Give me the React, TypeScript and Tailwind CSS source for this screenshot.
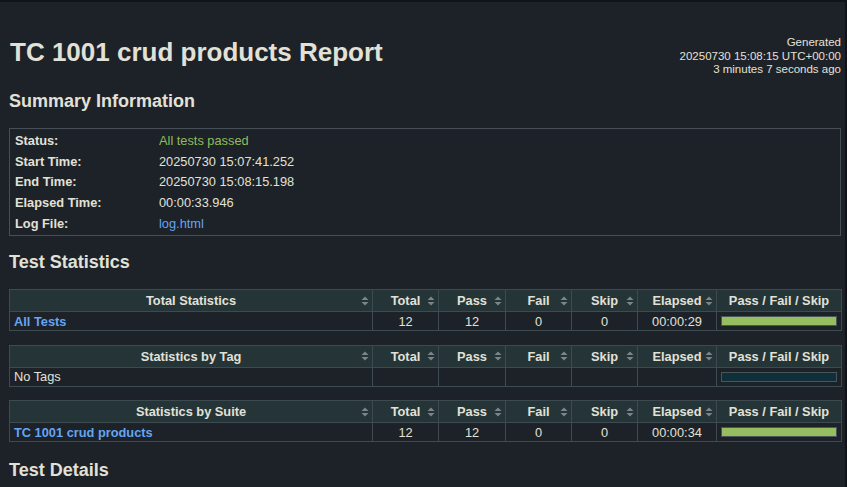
import React from "react";

const SortIcon = () => (
  <svg width="8" height="10" viewBox="0 0 8 10" className="absolute right-[3px] top-1/2 -translate-y-1/2">
    <polygon points="4,0.5 7.5,4 0.5,4" fill="#7c8589" />
    <polygon points="0.5,6 7.5,6 4,9.5" fill="#7c8589" />
  </svg>
);

type Row = {
  name: string;
  link: boolean;
  total: string;
  pass: string;
  fail: string;
  skip: string;
  elapsed: string;
  bar: "pass" | "empty";
};

const StatTable = ({ title, row }: { title: string; row: Row }) => {
  const th = "relative h-[22px] border border-[#3d4a50] bg-[#253537] text-center font-bold text-[#e2e1d7] p-0 leading-[15px]";
  const td = "h-[19px] border border-[#3d4a50] text-center p-0 leading-[15px]";
  return (
    <table className="table-fixed border-collapse w-[832px]">
      <colgroup>
        <col className="w-[363px]" />
        <col className="w-[66px]" />
        <col className="w-[67px]" />
        <col className="w-[66px]" />
        <col className="w-[66px]" />
        <col className="w-[79px]" />
        <col className="w-[125px]" />
      </colgroup>
      <thead>
        <tr>
          <th className={th}>
            {title}
            <SortIcon />
          </th>
          <th className={th}>
            Total
            <SortIcon />
          </th>
          <th className={th}>
            Pass
            <SortIcon />
          </th>
          <th className={th}>
            Fail
            <SortIcon />
          </th>
          <th className={th}>
            Skip
            <SortIcon />
          </th>
          <th className={th}>
            Elapsed
            <SortIcon />
          </th>
          <th className={th}>Pass / Fail / Skip</th>
        </tr>
      </thead>
      <tbody>
        <tr>
          <td className={`${td} text-left pl-[4px] ${row.link ? "font-bold text-[#63a6f2]" : "text-[#e2e1d7]"}`}>{row.name}</td>
          <td className={td}>{row.total}</td>
          <td className={td}>{row.pass}</td>
          <td className={td}>{row.fail}</td>
          <td className={td}>{row.skip}</td>
          <td className={td}>{row.elapsed}</td>
          <td className={`${td} px-[4px]`}>
            <div
              className={`h-[10px] w-full border border-[#4a5559] ${row.bar === "pass" ? "bg-[#97bd61]" : "bg-[#0f2f3a]"}`}
            />
          </td>
        </tr>
      </tbody>
    </table>
  );
};

export default function App() {
  return (
    <div
      className="w-[847px] h-[487px] overflow-hidden bg-[#1d2128] text-[#e2e1d7] border-t-2 border-r-2 border-[#101317] text-[12.8px]"
      style={{ fontFamily: '"Liberation Sans", Arial, Helvetica, sans-serif' }}
    >
      <div className="pl-[9px] pr-[4px]">
        <div className="flex justify-between items-start">
          <h1 className="mt-[35px] text-[26px] font-bold leading-[30px] pl-[1px]">TC 1001 crud products Report</h1>
          <div className="mt-[34px] text-right text-[11.5px] leading-[13.5px]">
            <div>Generated</div>
            <div>20250730 15:08:15 UTC+00:00</div>
            <div>3 minutes 7 seconds ago</div>
          </div>
        </div>

        <h2 className="mt-[13px] text-[18px] font-bold leading-[22px]">Summary Information</h2>

        <div className="mt-[16px] w-[832px] border border-[#454f55] py-[2px] pl-[5px]">
          {[
            ["Status:", "All tests passed", "text-[#8fbd5a]"],
            ["Start Time:", "20250730 15:07:41.252", ""],
            ["End Time:", "20250730 15:08:15.198", ""],
            ["Elapsed Time:", "00:00:33.946", ""],
            ["Log File:", "log.html", "text-[#63a6f2]"],
          ].map(([k, v, c]) => (
            <div key={k} className="flex h-[20.6px] items-center">
              <div className="w-[144px] font-bold">{k}</div>
              <div className={c}>{v}</div>
            </div>
          ))}
        </div>

        <h2 className="mt-[15px] text-[18px] font-bold leading-[22px]">Test Statistics</h2>

        <div className="mt-[16px] flex flex-col gap-[13.5px]">
          <StatTable
            title="Total Statistics"
            row={{ name: "All Tests", link: true, total: "12", pass: "12", fail: "0", skip: "0", elapsed: "00:00:29", bar: "pass" }}
          />
          <StatTable
            title="Statistics by Tag"
            row={{ name: "No Tags", link: false, total: "", pass: "", fail: "", skip: "", elapsed: "", bar: "empty" }}
          />
          <StatTable
            title="Statistics by Suite"
            row={{ name: "TC 1001 crud products", link: true, total: "12", pass: "12", fail: "0", skip: "0", elapsed: "00:00:34", bar: "pass" }}
          />
        </div>

        <h2 className="mt-[17px] text-[18px] font-bold leading-[22px]">Test Details</h2>
      </div>
    </div>
  );
}
